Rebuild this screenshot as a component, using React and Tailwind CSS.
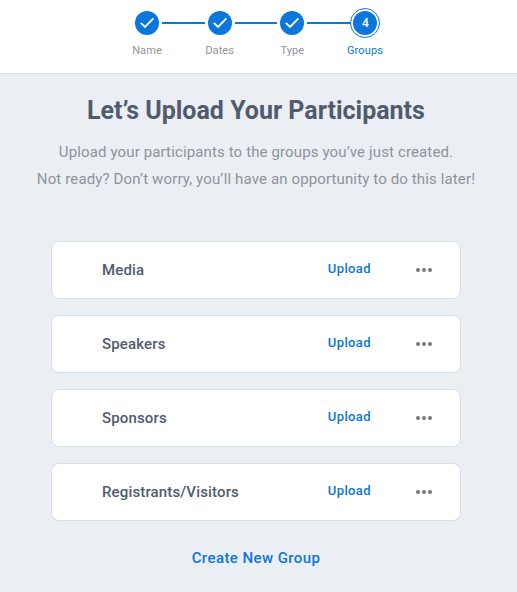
import { Fragment } from "react";

const steps = [
    { label: "Name", done: true },
    { label: "Dates", done: true },
    { label: "Type", done: true },
    { label: "Groups", done: false },
];

const groups = ["Media", "Speakers", "Sponsors", "Registrants/Visitors"];

const Check = () => (
    <svg width="24" height="24" viewBox="0 0 24 24" fill="none">
        <path d="M5.8 11.9L10 15.9L18.4 7.4" stroke="#fff" strokeWidth="1.9" />
    </svg>
);

const Step = ({ step, index }) => {
    const last = index === steps.length - 1;

    return (
        <div className="w-[72.67px]">
            <div className="flex h-[30px] items-center">
                <div className={`h-[2px] flex-1 ${index > 0 ? "bg-[#0b76db]" : ""}`} />
                {step.done ? (
                    <div className="mx-[3px] h-6 w-6 rounded-full bg-[#0b76db]">
                        <Check />
                    </div>
                ) : (
                    <div className="flex h-[30px] w-[30px] items-center justify-center rounded-full border border-[#0b76db]">
                        <div className="flex h-6 w-6 items-center justify-center rounded-full bg-[#0b76db] pl-px text-[12px] font-medium text-white">
                            {index + 1}
                        </div>
                    </div>
                )}
                <div className={`h-[2px] flex-1 ${last ? "" : "bg-[#0b76db]"}`} />
            </div>
            <p
                className={`mt-[5px] text-center text-[11px] leading-4 tracking-[0.1px] ${
                    step.done ? "text-[#8f949b]" : "text-[#0b76db]"
                }`}
            >
                {step.label}
            </p>
        </div>
    );
};

const GroupCard = ({ name }) => (
    <div className="flex h-[58px] items-center rounded-lg border border-[#d9dfe8] bg-white pl-[50px] pr-[28px]">
        <span className="flex-1 text-[15px] font-medium leading-5 tracking-[0.15px] text-[#505b6e]">{name}</span>
        <button className="mb-[3px] mr-[45px] text-[13px] font-medium leading-5 tracking-[0.39px] text-[#0b76db]">
            Upload
        </button>
        <button className="flex gap-[2px]" aria-label="More">
            <span className="h-1 w-1 rounded-full bg-[#757575]" />
            <span className="h-1 w-1 rounded-full bg-[#757575]" />
            <span className="h-1 w-1 rounded-full bg-[#757575]" />
        </button>
    </div>
);

const App = () => {
    return (
        <div className="min-h-screen bg-[#ebeef3] font-[Roboto,sans-serif]">
            <header className="h-[74px] border-b border-[#d9dfe8] bg-white pr-[5px] pt-2">
                <div className="flex justify-center">
                    {steps.map((step, index) => (
                        <Fragment key={step.label}>
                            <Step step={step} index={index} />
                        </Fragment>
                    ))}
                </div>
            </header>

            <main className="pr-[5px] pt-[21px] text-center">
                <h1 className="text-[25px] font-bold leading-8 text-[#505b6e]">Let’s Upload Your Participants</h1>
                <p className="mt-[12px] whitespace-nowrap text-[15px] leading-[27px] tracking-[0.13px] text-[#8f949b]">
                    Upload your participants to the groups you’ve just created.
                    <br />
                    Not ready? Don’t worry, you’ll have an opportunity to do this later!
                </p>
                <div className="mx-auto mt-[48px] flex w-[410px] flex-col gap-4 text-left">
                    {groups.map((name) => (
                        <GroupCard key={name} name={name} />
                    ))}
                </div>
                <button className="mt-[27px] text-[15px] font-medium leading-5 tracking-[0.42px] text-[#0b76db]">
                    Create New Group
                </button>
            </main>
        </div>
    );
};

export default App;
